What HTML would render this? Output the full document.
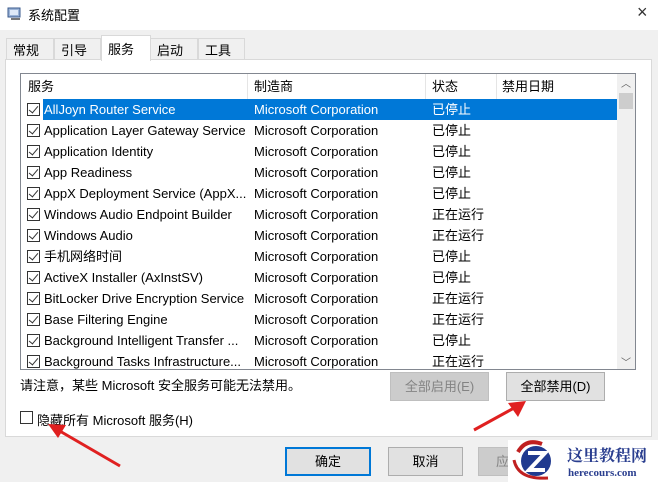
<!DOCTYPE html>
<html><head><meta charset="utf-8"><style>
*{margin:0;padding:0;box-sizing:border-box}
body{width:658px;height:482px;overflow:hidden;background:#f0f0f0;font-family:"Liberation Sans","Noto Sans CJK SC",sans-serif;font-size:13px;color:#000;position:relative}
.abs{position:absolute}
.title{left:0;top:0;width:658px;height:30px;background:#fff}
.tab{top:38px;height:22px;border:1px solid #d9d9d9;border-bottom:none;background:#f0f0f0;padding:1px 0 0 6px;font-size:13px}
.panel{left:5px;top:59px;width:647px;height:378px;background:#fff;border:1px solid #d9d9d9}
.list{left:20px;top:73px;width:616px;height:297px;border:1px solid #828790;background:#fff;overflow:hidden}
.row{position:absolute;left:0;height:21px;width:596px;line-height:21px;white-space:nowrap}
.row span{position:absolute;top:0}
.cb{position:absolute;left:6px;top:4px;width:13px;height:13px;border:1px solid #333;background:#fff}
.cb:after{content:"";position:absolute;left:3px;top:0px;width:4px;height:8px;border:solid #333;border-width:0 1.5px 1.5px 0;transform:rotate(40deg)}
.sel{background:#0078d7;color:#fff}
.btn{height:29px;border:1px solid #adadad;background:#e1e1e1;text-align:center;line-height:27px;font-size:13px}
</style></head><body>
<div class="abs title"></div>
<svg class="abs" style="left:7px;top:6px" width="16" height="16"><rect x="1" y="2" width="12" height="9" fill="#9bb3d6" stroke="#3a5a8c"/><rect x="3" y="4" width="8" height="5" fill="#dfe9f7"/><rect x="4" y="12" width="9" height="2" fill="#777"/></svg>
<div class="abs" style="left:28px;top:5px;font-size:13px">系统配置</div>
<div class="abs" style="left:637px;top:2px;font-size:18px;color:#333">×</div>
<div class="abs tab" style="left:6px;width:48px">常规</div>
<div class="abs tab" style="left:54px;width:47px">引导</div>
<div class="abs tab" style="left:150px;width:48px">启动</div>
<div class="abs tab" style="left:198px;width:47px">工具</div>
<div class="abs panel"></div>
<div class="abs tab" style="left:101px;top:35px;width:50px;height:26px;background:#fff;padding-top:3px">服务</div>
<div class="abs list">
 <div class="row" style="top:0;height:25px;line-height:25px;width:614px">
  <span style="left:7px">服务</span><span style="left:233px">制造商</span><span style="left:411px">状态</span><span style="left:481px">禁用日期</span>
 </div>
 <div class="abs" style="left:226px;top:0;width:1px;height:25px;background:#e5e5e5"></div>
 <div class="abs" style="left:404px;top:0;width:1px;height:25px;background:#e5e5e5"></div>
 <div class="abs" style="left:475px;top:0;width:1px;height:25px;background:#e5e5e5"></div>
 <div class="abs" style="left:596px;top:0;width:18px;height:295px;background:#f0f0f0"></div>
 <div class="abs" style="left:598px;top:19px;width:14px;height:16px;background:#cdcdcd"></div>
 <div class="abs" style="left:600px;top:1px;font-size:10px;color:#606060">︿</div>
 <div class="abs" style="left:600px;top:280px;font-size:10px;color:#606060">﹀</div>
 <div id="rows"></div>
</div>
<script>
var d=[["AllJoyn Router Service","已停止"],["Application Layer Gateway Service","已停止"],["Application Identity","已停止"],["App Readiness","已停止"],["AppX Deployment Service (AppX...","已停止"],["Windows Audio Endpoint Builder","正在运行"],["Windows Audio","正在运行"],["手机网络时间","已停止"],["ActiveX Installer (AxInstSV)","已停止"],["BitLocker Drive Encryption Service","正在运行"],["Base Filtering Engine","正在运行"],["Background Intelligent Transfer ...","已停止"],["Background Tasks Infrastructure...","正在运行"]];
var h="";d.forEach(function(r,i){var c=i==0?'color:#fff':'';h+='<div class="row" style="top:'+(25+i*21)+'px"><div class="cb"></div><span class="'+(i==0?'sel':'')+'" style="left:22px;width:574px;height:21px"></span><span style="left:23px;'+c+'">'+r[0]+'</span><span style="left:233px;'+c+'">Microsoft Corporation</span><span style="left:411px;'+c+'">'+r[1]+'</span></div>'});
document.getElementById("rows").innerHTML=h;
</script>
<div class="abs" style="left:20px;top:375px">请注意，某些 Microsoft 安全服务可能无法禁用。</div>
<div class="abs btn" style="left:390px;top:372px;width:99px;background:#cccccc;border-color:#bfbfbf;color:#838383">全部启用(E)</div>
<div class="abs btn" style="left:506px;top:372px;width:99px">全部禁用(D)</div>
<div class="abs" style="left:20px;top:411px;width:13px;height:13px;border:1px solid #333;background:#fff"></div>
<div class="abs" style="left:37px;top:410px">隐藏所有 Microsoft 服务(H)</div>
<div class="abs btn" style="left:285px;top:447px;width:86px;border:2px solid #0078d7;line-height:25px">确定</div>
<div class="abs btn" style="left:388px;top:447px;width:75px">取消</div>
<div class="abs btn" style="left:478px;top:447px;width:60px;background:#ccc;border-color:#bfbfbf;color:#838383;text-align:left;padding-left:17px">应用</div>
<svg class="abs" style="left:0;top:0" width="658" height="482">
<g stroke="#e02020" stroke-width="3" fill="#e02020">
<line x1="120" y1="466" x2="58" y2="430"/><polygon points="48,424 66,425 58,438" stroke="none"/>
<line x1="474" y1="430" x2="514" y2="408"/><polygon points="526,401 518,417 508,403" stroke="none"/>
</g>
<rect x="508" y="440" width="150" height="42" fill="#fff"/>
<path d="M518 452 Q526 438 542 444" stroke="#c02020" stroke-width="4" fill="none"/>
<path d="M514 460 Q518 480 548 478" stroke="#c02020" stroke-width="3" fill="none"/>
<circle cx="536" cy="461" r="15" fill="#213a8f"/>
<path d="M528 453 L545 453 L529 470 L545 470" stroke="#fff" stroke-width="4" fill="none"/>
<text x="567" y="461" font-family="Noto Serif CJK SC,serif" font-weight="bold" font-size="16" fill="#2a3e8f">这里教程网</text>
<text x="568" y="476" font-family="Liberation Serif,serif" font-weight="bold" font-size="11" fill="#2a3e8f">herecours.com</text>
</svg>
</body></html>
